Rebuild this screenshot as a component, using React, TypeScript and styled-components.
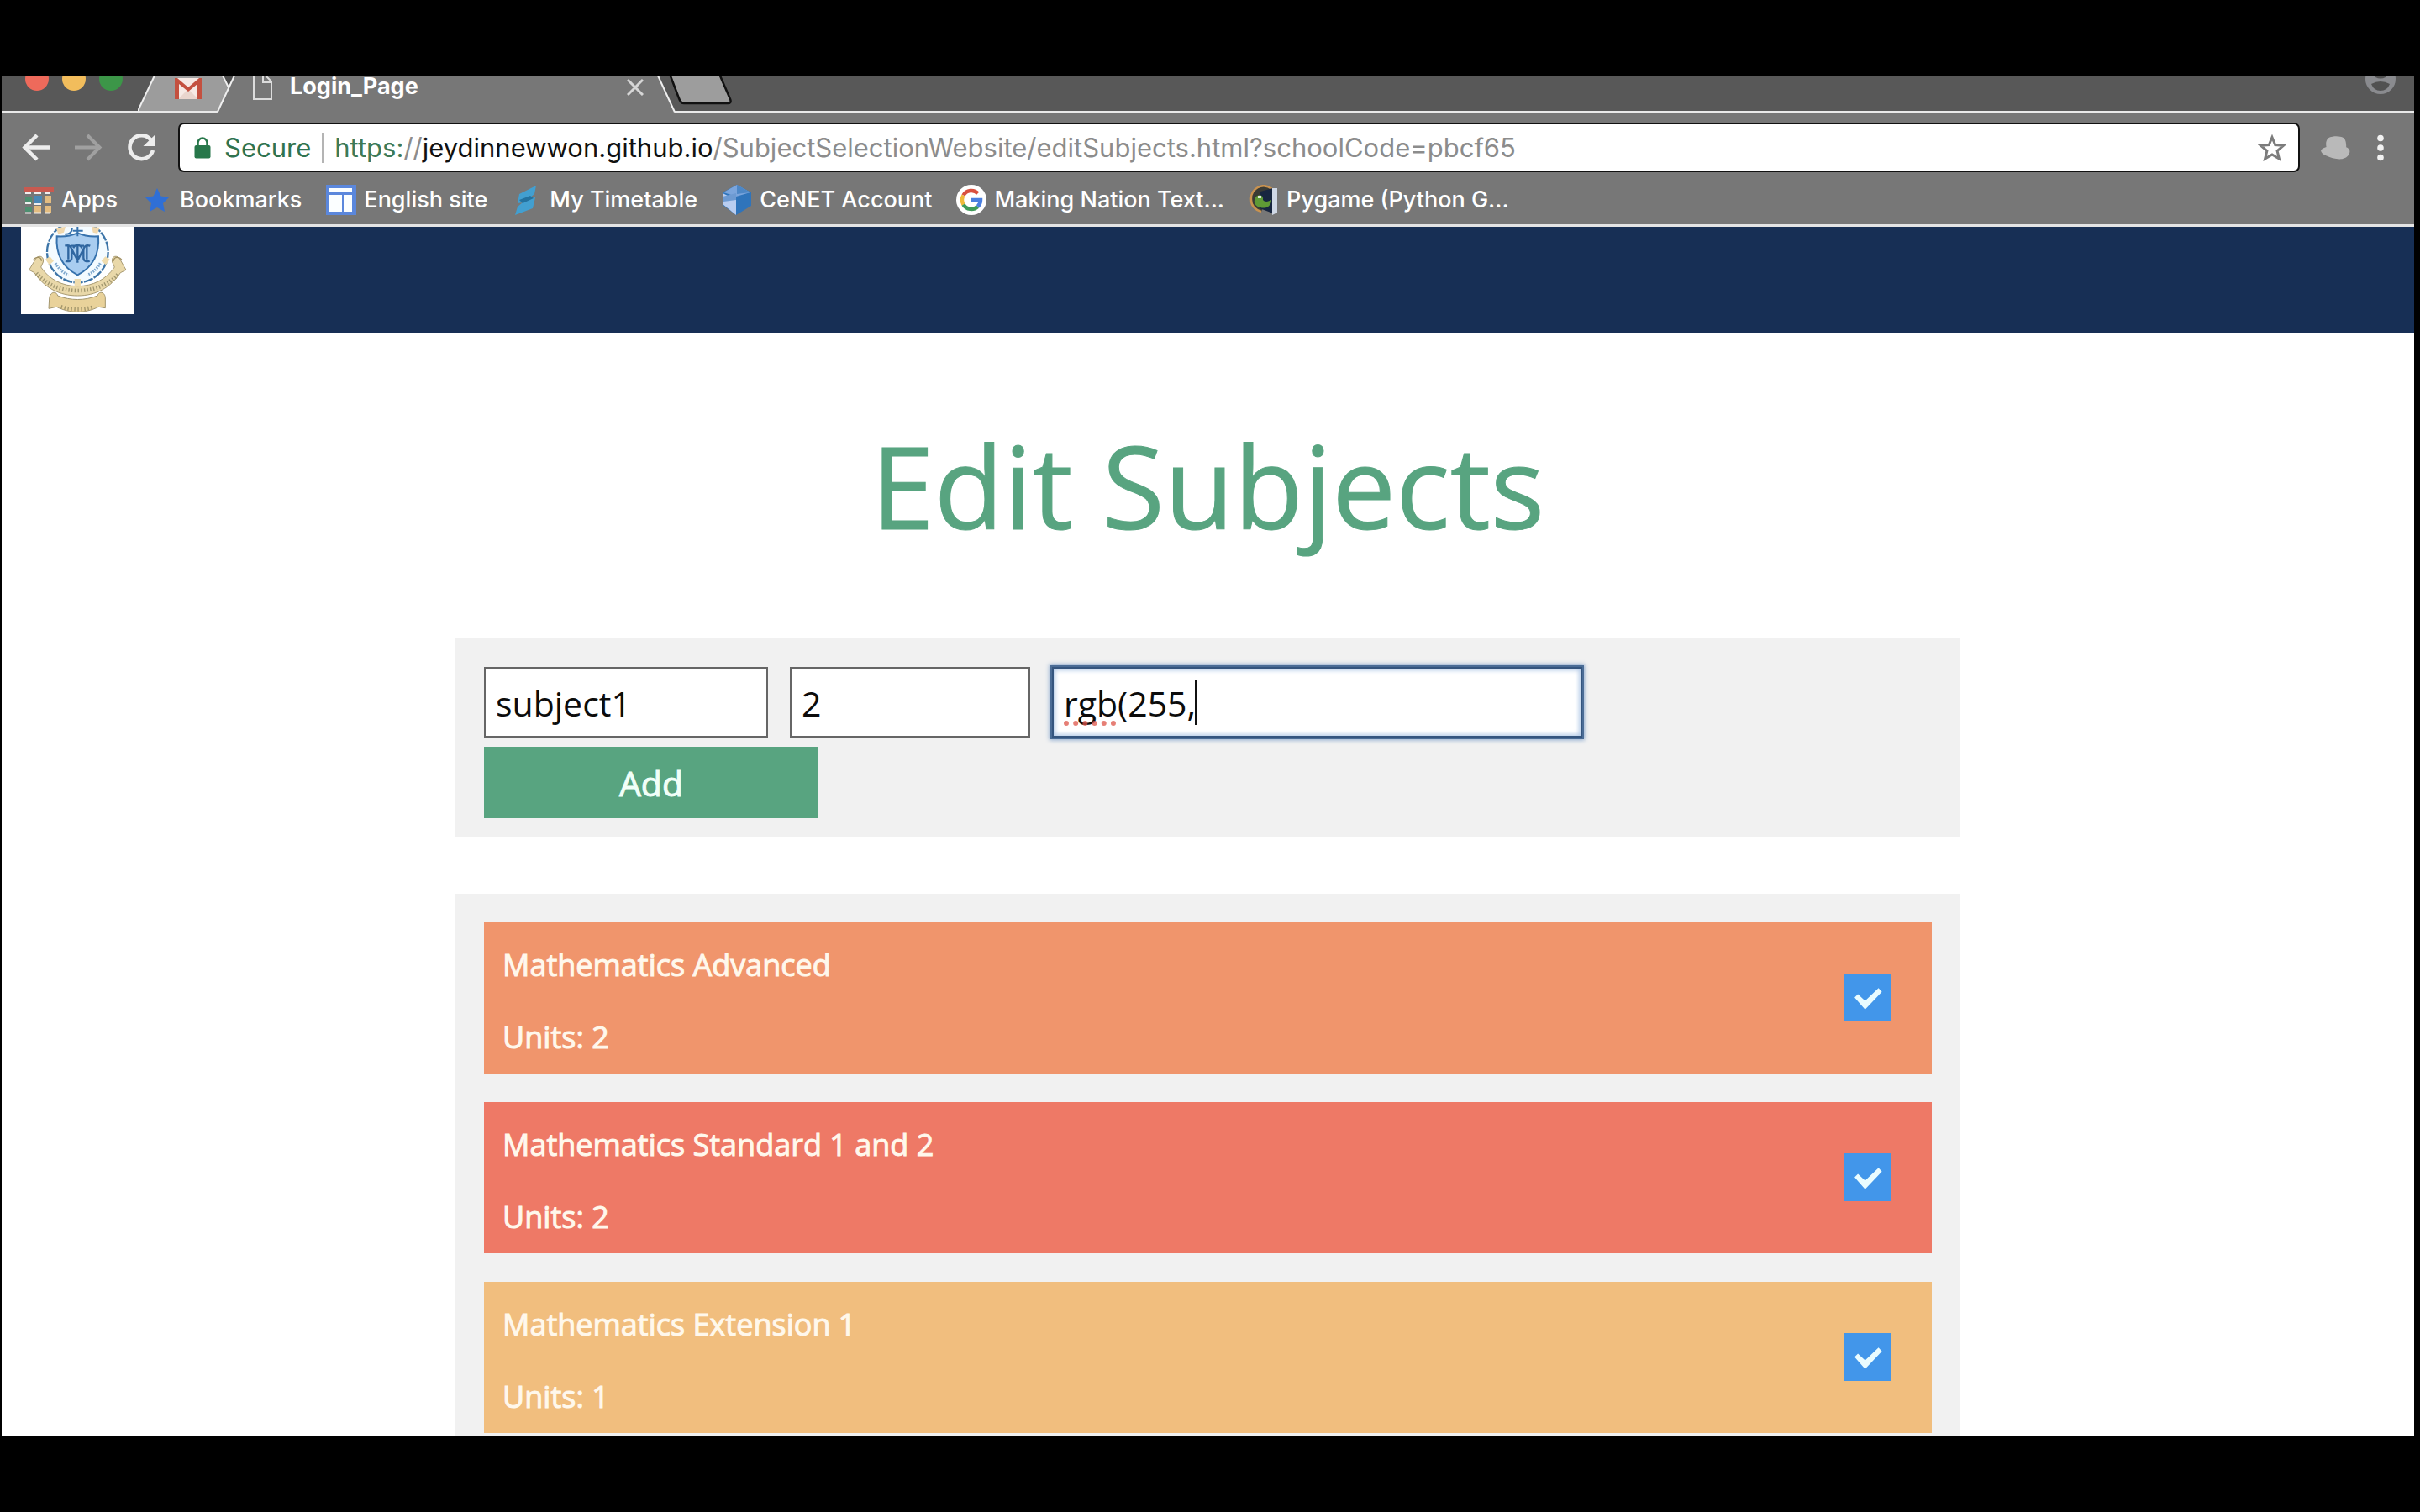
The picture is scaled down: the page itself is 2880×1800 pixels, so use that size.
import React from 'react';
import styled, { createGlobalStyle } from 'styled-components';

const GlobalStyle = createGlobalStyle`
  *, *::before, *::after { box-sizing: border-box; }
  html, body { margin: 0; background: #000; }
  button, input { font: inherit; }
`;

const chromeFont = `Inter, Roboto, "Liberation Sans", sans-serif`;
const pageFont = `"Open Sans", "Noto Sans", sans-serif`;

/* ---------- frame ---------- */

const Screen = styled.div`
  display: flex;
  height: 100vh;
  padding: 90px 7px 90px 2px;
  background: #000;
`;

const BrowserWindow = styled.div`
  display: flex;
  flex-direction: column;
  flex: 1;
  min-width: 0;
  background: #fff;
`;

const PlainButton = styled.button`
  display: flex;
  align-items: center;
  justify-content: center;
  flex: none;
  padding: 0;
  border: 0;
  background: none;
  color: inherit;
`;

/* ---------- tab strip ---------- */

const TabStrip = styled.div`
  display: flex;
  flex: none;
  height: 45px;
  background: #585858;
  box-shadow: inset 0 -3px 0 #e9e9e9;
  font-family: ${chromeFont};
`;

const Lights = styled.div`
  display: flex;
  gap: 16px;
  width: 162px;
  padding-left: 28px;
  overflow: hidden;
`;

const Light = styled(PlainButton)<{ $color: string }>`
  width: 28px;
  height: 28px;
  margin-top: -10px;
  border-radius: 50%;
  background: ${(p) => p.$color};
`;

const Edge = styled.svg`
  display: block;
  flex: none;
`;

const MailTab = styled(PlainButton)`
  align-items: flex-start;
  width: 72px;
  height: 42px;
  padding: 1px 0 0 4px;
  background: #9c9c9c;
`;

const ActiveTab = styled.div`
  display: flex;
  align-items: flex-start;
  width: 500px;
  padding: 0 15px 0 19px;
  background: #777;
  color: #fff;
`;

const TabTitle = styled.span`
  flex: 1;
  margin-left: 20px;
  font-size: 27px;
  font-weight: 700;
  line-height: 26px;
`;

const CloseButton = styled(PlainButton)`
  height: 28px;
`;

const Profile = styled(PlainButton)`
  align-items: flex-start;
  margin-left: auto;
  margin-right: 22px;
`;

/* ---------- toolbar ---------- */

const Toolbar = styled.div`
  display: flex;
  align-items: center;
  flex: none;
  padding: 11px 34px 0 24px;
  background: #777;
  font-family: ${chromeFont};
`;

const NavButtons = styled.div`
  display: flex;
  gap: 30px;
  width: 186px;
`;

const Omnibox = styled.div`
  display: flex;
  align-items: center;
  flex: 1;
  height: 59px;
  padding: 0 14px 0 17px;
  border: 2px solid #111;
  border-radius: 7px;
  background: #fff;
  font-size: 31px;
  line-height: 40px;
  white-space: nowrap;
`;

const Secure = styled.span`
  margin-left: 16px;
  color: #2f7350;
`;

const Divider = styled.span`
  width: 2px;
  height: 36px;
  margin: 0 13px;
  background: #b4b4b4;
`;

const Url = styled.span`
  flex: 1;
  color: #8c8c8c;
`;

const Scheme = styled.span`
  color: #3d7a57;
`;

const Host = styled.span`
  color: #111;
`;

const Actions = styled.div`
  display: flex;
  align-items: center;
  gap: 30px;
  padding-left: 25px;
`;

/* ---------- bookmarks ---------- */

const BookmarkBar = styled.nav`
  display: flex;
  align-items: center;
  gap: 29px;
  flex: none;
  height: 65px;
  padding: 4px 26px 0;
  border-bottom: 3px solid #e4e4e4;
  background: #777;
  font-family: ${chromeFont};
`;

const Bookmark = styled.a`
  display: flex;
  align-items: center;
  gap: 9px;
  color: #fff;
  font-size: 27px;
  font-weight: 500;
  line-height: 36px;
  text-decoration: none;
  white-space: nowrap;
`;

/* ---------- page ---------- */

const Page = styled.div`
  flex: 1;
  min-height: 0;
  overflow: hidden;
  font-family: ${pageFont};
`;

const Header = styled.header`
  display: flex;
  padding: 0 23px 22px;
  background: #172f55;
`;

const Crest = styled.svg`
  display: block;
  width: 135px;
  height: 104px;
  background: #fff;
`;

const Main = styled.main`
  display: flex;
  flex-direction: column;
  max-width: 1791px;
  margin: 0 auto;
`;

const Title = styled.h1`
  margin: 88px 0;
  color: #58a480;
  font-size: 135px;
  font-weight: 400;
  line-height: 188px;
  text-align: center;
  -webkit-text-stroke: 1px currentColor;
`;

const AddForm = styled.form`
  display: flex;
  flex-wrap: wrap;
  gap: 11px 26px;
  margin-bottom: 67px;
  padding: 34px 34px 23px;
  background: #f1f1f1;
`;

const Field = styled.label<{ $width: number }>`
  position: relative;
  display: block;
  width: ${(p) => p.$width}px;
`;

const TextInput = styled.input<{ $focused?: boolean }>`
  display: block;
  width: 100%;
  height: 84px;
  padding: 2px 12px 0;
  border: 2px solid ${(p) => (p.$focused ? '#34557f' : '#666')};
  border-radius: 0;
  outline: none;
  background: #fff;
  color: #0c0c0c;
  font-size: 41px;
  box-shadow: ${(p) =>
    p.$focused
      ? '0 0 0 2px #4a6c96, 0 0 5px 3px #8ba9cf, inset 0 0 5px 2px #b4cbe8'
      : 'none'};
`;

const Caret = styled.span`
  position: absolute;
  top: 16px;
  left: 170px;
  width: 2px;
  height: 53px;
  background: #111;
`;

const SpellingMark = styled.span`
  position: absolute;
  top: 64px;
  left: 14px;
  width: 62px;
  border-top: 6px dotted rgba(222, 84, 72, 0.75);
`;

const AddButton = styled.button`
  width: 398px;
  height: 85px;
  padding: 0;
  border: 0;
  background: #58a480;
  color: #f1fff8;
  font-size: 41px;
  -webkit-text-stroke: 1px currentColor;
`;

const SubjectList = styled.ul`
  display: flex;
  flex-direction: column;
  gap: 34px;
  margin: 0;
  padding: 34px;
  background: #f1f1f1;
  list-style: none;
`;

const Subject = styled.li<{ $color: string }>`
  display: flex;
  align-items: center;
  justify-content: space-between;
  height: 180px;
  padding: 0 48px 2px 22px;
  background: ${(p) => p.$color};
  color: #fff8ec;
  font-size: 36px;
  line-height: 52px;
  -webkit-text-stroke: 1px currentColor;
`;

const SubjectText = styled.label`
  display: flex;
  flex-direction: column;
  gap: 34px;
  padding-top: 10px;
`;

const Tick = styled.input`
  appearance: none;
  width: 57px;
  height: 57px;
  margin: 0;
  background: #4296ea;

  &:checked::before {
    content: '';
    display: block;
    width: 100%;
    height: 100%;
    background: #eafcff;
    clip-path: polygon(23% 51%, 30% 44%, 45% 58%, 73% 31%, 80% 39%, 45% 76%);
  }
`;

/* ---------- icons ---------- */

const GmailIcon = () => (
  <svg width="34" height="27" viewBox="0 0 34 27" aria-hidden="true">
    <path d="M2 2h30v25H2z" fill="#f6e9e4" />
    <path d="M5 27 17 15l12 12z" fill="#e9d5cd" />
    <path d="M1 27V2h3l13 11L30 2h3v25h-5V9L17 18 6 9v18z" fill="#c4503f" />
  </svg>
);

const PageIcon = () => (
  <svg width="25" height="30" viewBox="0 0 25 30" fill="none" stroke="#dcdcdc" strokeWidth="2" aria-hidden="true">
    <path d="M2-4v32h21V7L13-3v11h10" />
  </svg>
);

const BackIcon = () => (
  <svg width="33" height="33" viewBox="0 0 33 33" fill="none" stroke="#ededed" strokeWidth="4.5" aria-hidden="true">
    <path d="M33 16.500H4M18 2 3.500 16.500 18 31" />
  </svg>
);

const ForwardIcon = () => (
  <svg width="33" height="33" viewBox="0 0 33 33" fill="none" stroke="#a0a0a0" strokeWidth="4" aria-hidden="true">
    <path d="M0 16.500h29M15 2l14.500 14.500L15 31" />
  </svg>
);

const ReloadIcon = () => (
  <svg width="33" height="33" viewBox="0 0 33 33" aria-hidden="true">
    <path d="M27.500 7.500A14 14 0 1 0 30 20" fill="none" stroke="#ededed" strokeWidth="4.500" />
    <path d="M33 1v14H18.500z" fill="#ededed" />
  </svg>
);

const LockIcon = () => (
  <svg width="20" height="26" viewBox="0 0 20 26" aria-hidden="true">
    <path d="M4.500 11V7a5.500 5.500 0 0 1 11 0v4" fill="none" stroke="#27774a" strokeWidth="2.500" />
    <rect x="0.500" y="10" width="19" height="15.500" rx="2" fill="#27774a" />
  </svg>
);

const StarOutline = () => (
  <svg width="34" height="32" viewBox="0 0 34 32" aria-hidden="true">
    <path d="M17 3.500 20.700 12.500l9.800.8-7.400 6.300 2.300 9.400L17 24l-8.400 5 2.300-9.400-7.400-6.300 9.800-.8z" fill="none" stroke="#7c7c7c" strokeWidth="3" />
  </svg>
);

const HatIcon = () => (
  <svg width="35" height="28" viewBox="366 246 102 82" aria-hidden="true">
    <path d="M385 284c-4-18 2-36 22-36 10-2 20-1 30 1 14 3 18 18 17 36 8 3 14 9 12 18-3 14-14 20-26 23-20 2-40-4-54-11-10-4-20-10-20-19 2-6 12-10 19-12z" fill="#b9b9b9" />
  </svg>
);

const MenuIcon = () => (
  <svg width="12" height="32" viewBox="0 0 12 32" fill="#f2f2f2" aria-hidden="true">
    <circle cx="6" cy="4.500" r="3.800" />
    <circle cx="6" cy="16" r="3.800" />
    <circle cx="6" cy="27.500" r="3.800" />
  </svg>
);

const iconBox = { width: 36, height: 36, 'aria-hidden': true } as const;

const AppsIcon = () => (
  <svg {...iconBox} viewBox="0 0 36 36">
    <path d="M1 3h35v6H1z" fill="#c85a50" />
    <path d="M2 14h8v8H2zM2 26h8v6H2z" fill="#4d8f70" />
    <path d="M13 13h9v9h-9z" fill="#4a87b5" />
    <path d="M25 13h8v9h-8zM13 25h8v8h-8zM25 25h8v8h-8z" fill="#e3bc80" />
    <path d="M2 10h7M13 10h8M25 10h7M2 22h7M2 33.500h7M13 23h8M13 33.500h8M25 33.500h7" stroke="#eee" strokeWidth="2" />
  </svg>
);

const StarIcon = () => (
  <svg {...iconBox} viewBox="0 0 36 36">
    <path d="m18 4 4.500 9.500L32 15l-7 7 2 10-9-5-9 5 2-10-7-7 9.500-1.500z" fill="#2f6fd6" />
  </svg>
);

const SiteIcon = () => (
  <svg {...iconBox} viewBox="0 0 36 36">
    <path d="M0 0h36v36H0z" fill="#5b87dc" />
    <path d="M3 4h28v5H3zM3 12h16v20H3zM21 12h10v20H21z" fill="#fbfeff" />
  </svg>
);

const TimetableIcon = () => (
  <svg {...iconBox} viewBox="0 0 36 36">
    <path d="M9 11 29 1l-2 10-6 5 7-1-3 13L4 36l3-10 6-5-6 1z" fill="#429fd0" />
    <path d="m9 18 13-5 4 3-13 6z" fill="#23729f" />
  </svg>
);

const CenetIcon = () => (
  <svg {...iconBox} viewBox="0 0 36 36">
    <path d="M18 0 35 9v16L17 36 1 24V9z" fill="#2f74bb" />
    <path d="M18 0 2 9l15 5 17-5z" fill="#7ba5dc" />
    <path d="M1 10v13l16 13V18z" fill="#b9cdf0" />
    <path d="m1 14 16-4v8L2 20z" fill="#6d9ad2" />
    <path d="M18 0v11l16-2z" fill="#4d87c6" />
  </svg>
);

const GoogleIcon = () => (
  <svg {...iconBox} viewBox="0 0 36 36">
    <circle cx="18" cy="18" r="18" fill="#fff" />
    <g fill="none" strokeWidth="4.500">
      <path d="M25.800 10.200A11 11 0 0 0 8.500 12.500" stroke="#d9503f" />
      <path d="M8.500 12.500a11 11 0 0 0 0 11" stroke="#efb93a" />
      <path d="M8.500 23.500a11 11 0 0 0 17 2.500" stroke="#3f9a58" />
      <path d="M25.500 26a11 11 0 0 0 3.500-8H18" stroke="#4a7fe0" />
    </g>
  </svg>
);

const PygameIcon = () => (
  <svg {...iconBox} viewBox="0 0 36 36">
    <path d="M28 5C16-4 2 5 3 18c0 8 6 12 12 14" fill="#3a3b35" stroke="#c9924f" strokeWidth="2.500" />
    <path d="M14 8 29 4v30L13 28z" fill="#172640" />
    <path d="M8 15c4-5 10-3 9 3 2 3 7 2 10 0 0 8-7 11-13 9-6-1-9-6-6-12z" fill="#5f9a35" />
    <path d="M11 13h4v3h-4z" fill="#dce6df" />
    <path d="M28 4h6v29l-6 3z" fill="#cfd8e6" />
  </svg>
);

const CollegeCrest = () => (
  <Crest viewBox="75 570 405 312" role="img" aria-label="College crest">
    <circle cx="277" cy="660" r="109" fill="#f4fbff" stroke="#3d75a8" strokeWidth="7" strokeDasharray="34 4" />
    <path d="M203 604c28 2 52-2 74-12 22 10 46 14 74 12 4 54-12 106-74 138-62-32-78-84-74-138z" fill="#a9cdf0" stroke="#3672ad" strokeWidth="6" />
    <path d="M232 638c16-6 24 4 24 18v24c0 12-10 16-22 12M322 638c-16-6-24 4-24 18v24c0 12 10 16 22 12M244 640v46M310 640v46M256 650l21 40 21-40M277 634v64M262 646c4-14 26-14 30 0M254 638h14M286 638h14" fill="none" stroke="#2f66a0" strokeWidth="7" />
    <path d="M277 570v34M260 584h36M232 596c12 2 24-4 26-22" fill="none" stroke="#3672ad" strokeWidth="6" />
    <path d="M200 574l34-4-6 20-20 6zM328 570l28 2-8 22-16-4z" fill="#f0d8ae" />
    <path d="M198 700c12 20 24 32 46 42M358 700c-12 20-24 32-46 42" fill="none" stroke="#7fa9cf" strokeWidth="10" strokeDasharray="5 4" />
    <path d="M104 724l26-44c14-10 28-2 24 16l-8 18c30 44 76 68 131 68s102-24 132-68l-8-18c-4-18 10-26 24-16l25 44-20 10c-36 54-88 82-153 82s-118-28-154-82z" fill="#e9d8a9" stroke="#a89a72" strokeWidth="3" />
    <path d="M162 686l16-10 14 16-16 14zM392 686l-16-10-14 16 16 14zM266 756h22v28h-22z" fill="#efdcae" />
    <path d="M130 736c36 40 84 62 147 62s112-22 148-62" fill="none" stroke="#a0966e" strokeWidth="14" strokeDasharray="4 7" />
    <path d="M118 690c10-16 30-14 30 2M436 690c-10-16-30-14-30 2" fill="none" stroke="#a08f60" strokeWidth="4" />
    <path d="M176 828c0-24 24-32 30-12 46 18 96 18 142 0 6-20 30-12 28 12v32l-24-4c-48 24-102 24-150 0l-28 6z" fill="#e9d29a" stroke="#a3966e" strokeWidth="3" />
    <path d="M218 856c40 12 78 12 116 0" fill="none" stroke="#a0946a" strokeWidth="14" strokeDasharray="4 8" />
  </Crest>
);

const bookmarks = [
  { label: 'Apps', Icon: AppsIcon },
  { label: 'Bookmarks', Icon: StarIcon },
  { label: 'English site', Icon: SiteIcon },
  { label: 'My Timetable', Icon: TimetableIcon },
  { label: 'CeNET Account', Icon: CenetIcon },
  { label: 'Making Nation Text...', Icon: GoogleIcon },
  { label: 'Pygame (Python G...', Icon: PygameIcon },
];

const subjects = [
  { id: 'advanced', name: 'Mathematics Advanced', units: 2, color: '#f0956c' },
  { id: 'standard', name: 'Mathematics Standard 1 and 2', units: 2, color: '#ee7966' },
  { id: 'extension', name: 'Mathematics Extension 1', units: 1, color: '#f1be7e' },
];

export default function App() {
  return (
    <>
      <GlobalStyle />
      <Screen>
        <BrowserWindow>
          <TabStrip>
            <Lights>
              <Light $color="#ee6a5b" aria-label="Close window" />
              <Light $color="#f2bd5c" aria-label="Minimise window" />
              <Light $color="#3c9648" aria-label="Zoom window" />
            </Lights>
            <Edge width="22" height="45" viewBox="0 0 22 45" aria-hidden="true">
              <path d="M0 42 20 0h2v42z" fill="#9c9c9c" />
              <path d="M0 42 20 0" stroke="#efefef" strokeWidth="2" />
            </Edge>
            <MailTab aria-label="Gmail">
              <GmailIcon />
            </MailTab>
            <Edge width="23" height="45" viewBox="0 0 23 45" aria-hidden="true">
              <path d="M0 0h23L2 42H0z" fill="#9c9c9c" />
              <path d="M7 0h14l-7 14z" fill="#4d4d4d" />
              <path d="M23 0v45H0l2-3L22 0z" fill="#777" />
              <path d="M7 0l7 14M21 0 1 43" stroke="#efefef" strokeWidth="2" fill="none" />
            </Edge>
            <ActiveTab>
              <PageIcon />
              <TabTitle>Login_Page</TabTitle>
              <CloseButton aria-label="Close tab">
                <svg width="20" height="20" viewBox="0 0 20 20" stroke="#d6d6d6" strokeWidth="3" aria-hidden="true">
                  <path d="m1 1 18 18M19 1 1 19" />
                </svg>
              </CloseButton>
            </ActiveTab>
            <PlainButton aria-label="New tab">
              <Edge width="92" height="45" viewBox="0 0 92 45" aria-hidden="true">
                <path d="M0 0h2l20 42v3H0z" fill="#777" />
                <path d="M2 0l20 43.500" stroke="#efefef" strokeWidth="2" />
                <path d="M16-2 27 27q2 6 6 6h52q5 0 3-5L75-2z" fill="#9d9d9d" stroke="#111" strokeWidth="2.500" />
              </Edge>
            </PlainButton>
            <Profile aria-label="Profile">
              <svg width="36" height="24" viewBox="0 -12 36 24" aria-hidden="true">
                <g transform="translate(0 -8)">
                  <circle cx="18" cy="0" r="18" fill="#8a8b8f" />
                  <path d="M7 6q11-6 22 0-3 8-11 8T7 6zM12-4h12v2q-6 3-12 0z" fill="#515151" />
                </g>
              </svg>
            </Profile>
          </TabStrip>

          <Toolbar>
            <NavButtons>
              <PlainButton aria-label="Back"><BackIcon /></PlainButton>
              <PlainButton aria-label="Forward"><ForwardIcon /></PlainButton>
              <PlainButton aria-label="Reload"><ReloadIcon /></PlainButton>
            </NavButtons>
            <Omnibox>
              <LockIcon />
              <Secure>Secure</Secure>
              <Divider />
              <Url>
                <Scheme>https:</Scheme>//<Host>jeydinnewwon.github.io</Host>/SubjectSelectionWebsite/editSubjects.html?schoolCode=pbcf65
              </Url>
              <PlainButton aria-label="Bookmark this page"><StarOutline /></PlainButton>
            </Omnibox>
            <Actions>
              <PlainButton aria-label="Extension"><HatIcon /></PlainButton>
              <PlainButton aria-label="Menu"><MenuIcon /></PlainButton>
            </Actions>
          </Toolbar>

          <BookmarkBar aria-label="Bookmarks">
            {bookmarks.map(({ label, Icon }) => (
              <Bookmark key={label} href="#">
                <Icon />
                {label}
              </Bookmark>
            ))}
          </BookmarkBar>

          <Page>
            <Header>
              <CollegeCrest />
            </Header>
            <Main>
              <Title>Edit Subjects</Title>
              <AddForm onSubmit={(e) => e.preventDefault()}>
                <Field $width={338}>
                  <TextInput aria-label="Subject name" defaultValue="subject1" />
                </Field>
                <Field $width={286}>
                  <TextInput aria-label="Units" defaultValue="2" />
                </Field>
                <Field $width={631}>
                  <TextInput $focused aria-label="Colour" defaultValue="rgb(255," />
                  <SpellingMark />
                  <Caret />
                </Field>
                <AddButton type="submit">Add</AddButton>
              </AddForm>
              <SubjectList>
                {subjects.map((s) => (
                  <Subject key={s.id} $color={s.color}>
                    <SubjectText htmlFor={s.id}>
                      <span>{s.name}</span>
                      <span>Units: {s.units}</span>
                    </SubjectText>
                    <Tick id={s.id} type="checkbox" defaultChecked />
                  </Subject>
                ))}
              </SubjectList>
            </Main>
          </Page>
        </BrowserWindow>
      </Screen>
    </>
  );
}
